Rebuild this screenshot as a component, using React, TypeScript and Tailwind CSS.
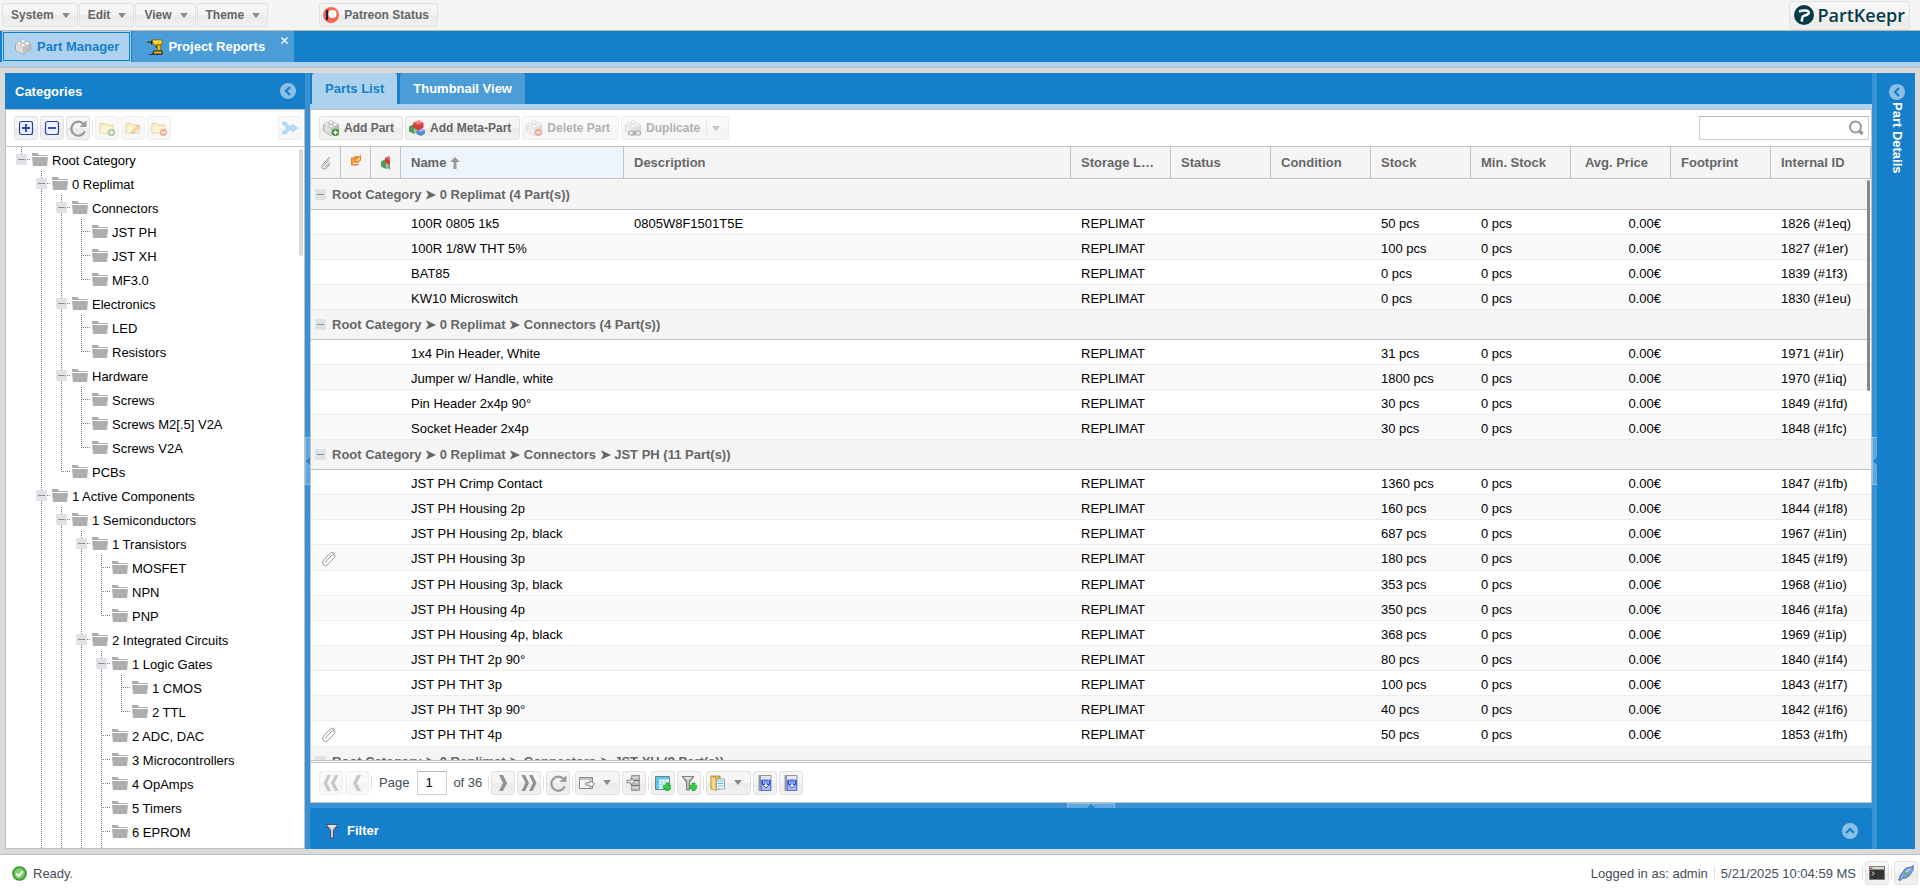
import type { ReactNode } from "react";

const BTN =
  "flex h-6 shrink-0 items-center rounded-[3px] border border-[#e1e1e1] bg-[linear-gradient(#f6f6f6_0%,#f5f5f5_50%,#ebebeb_51%,#f1f1f1_100%)] text-xs font-bold text-[#666]";

/* ---------- icons ---------- */

function Icon({ children, size = 16, className = "" }: { children: ReactNode; size?: number; className?: string }) {
  return (
    <svg width={size} height={size} viewBox="0 0 16 16" fill="none" aria-hidden="true" className={`shrink-0 ${className}`}>
      {children}
    </svg>
  );
}

function BrickShape() {
  return (
    <>
      <path d="M.5 5 8 1.500 15.500 5v6L8 15.500.5 11z" fill="#ececec" stroke="#9a9a9a" strokeWidth=".8" />
      <path d="M8 8.500 15 5.300V11L8 15z" fill="#bdbdbd" />
      <path d="M1 5.300l7 3.200V15L1 11z" fill="#dedede" />
      <g fill="#fcfcfc" stroke="#a0a0a0" strokeWidth=".6">
        <ellipse cx="8" cy="2.400" rx="2.300" ry="1.600" />
        <ellipse cx="4.200" cy="4.400" rx="2.300" ry="1.600" />
        <ellipse cx="11.800" cy="4.400" rx="2.300" ry="1.600" />
        <ellipse cx="8" cy="6.300" rx="2.300" ry="1.600" />
      </g>
    </>
  );
}

function PlusBadge() {
  return (
    <>
      <circle cx="12.500" cy="12.500" r="3.300" fill="#4f9a3a" stroke="#2d7420" strokeWidth=".6" />
      <path d="M12.500 10.500v4M10.500 12.500h4" stroke="#fff" strokeWidth="1.300" />
    </>
  );
}

function MinusBadge() {
  return (
    <>
      <circle cx="12.500" cy="12.500" r="3.300" fill="#ee6a3a" stroke="#c84a20" strokeWidth=".6" />
      <path d="M10.500 12.500h4" stroke="#fff" strokeWidth="1.300" />
    </>
  );
}

function MetaShape() {
  return (
    <>
      <path d="M0 6.500 5 4v10L0 11.500z" fill="#4f9d57" />
      <path d="M5 4l4 2v6.500L5 14z" fill="#8cc890" />
      <path d="M7.500 10 11.500 8l4.500 2v3.500L12 16l-4.500-2z" fill="#5c88c4" />
      <path d="M7.500 10l4-2 4.500 2-4 2z" fill="#9dbce4" />
      <path d="M4 3 9.500.5l5 2.500v4.500l-5 3L4 7.500z" fill="#d63c3c" />
      <path d="M4 3 9.500.5l5 2.500-5 2.500z" fill="#ec6464" />
      <ellipse cx="9.500" cy="1.800" rx="2.600" ry="1.300" fill="#f58c8c" />
    </>
  );
}

function YellowFolder() {
  return (
    <>
      <path d="M1 3.500h5l1.500 1.500H14v8H1z" fill="#f3dc8c" stroke="#c9a13e" strokeWidth=".9" />
      <path d="M1.500 7H13.500v5.500h-12z" fill="#f9eab0" />
    </>
  );
}

function Clip() {
  return (
    <path
      d="M4 11.500 10.800 4a1.800 1.800 0 0 1 2.700 2.400l-6.800 7.200a3 3 0 0 1-4.500-4l7-7.400a3 3 0 0 1 4.800.8"
      stroke="#8c8c8c"
      strokeWidth=".9"
    />
  );
}

function RefreshIcon() {
  return (
    <Icon size={18}>
      <path d="M13 4.600A6.200 6.200 0 1 0 14 11" stroke="#9a9a9a" strokeWidth="2" />
      <path d="M15.500 1v6.200H9.300z" fill="#9a9a9a" />
    </Icon>
  );
}

function Chevrons({ count, left = false }: { count: number; left?: boolean }) {
  return (
    <Icon className={left ? "rotate-180" : ""}>
      {count === 1 && <path d="M4 0h4l4 8-4 8H4l4-8z" fill="#919191" />}
      {count === 2 && <path d="M.5 0h3.500l4 8-4 8H.5l4-8zM8 0h3.500l4 8-4 8H8l4-8z" fill="#919191" />}
    </Icon>
  );
}

function Caret() {
  return <span className="border-x-4 border-t-[5px] border-x-transparent border-t-[#8a8a8a]" />;
}

function CollapseCircle({ up = false }: { up?: boolean }) {
  return (
    <Icon className={up ? "rotate-90" : ""}>
      <circle cx="8" cy="8" r="8" fill="#8bbfe6" />
      <path d="M10 4 6 8l4 4" stroke="#157fcc" strokeWidth="2.200" />
    </Icon>
  );
}

function Funnel({ light = false }: { light?: boolean }) {
  return (
    <>
      <path d="M1 1.500h12L8.500 7.500V15h-3V7.500z" fill={light ? "#b9b9c0" : "#9a9a9a"} stroke={light ? "#333f55" : "#707070"} strokeWidth=".8" />
      <path d="M2.500 2h9L7 6z" fill="#e3e3e8" />
      <path d="M7 6v8" stroke="#eee" strokeWidth=".8" />
    </>
  );
}

function GreenPlus() {
  return <path d="M11 8h3v2.500h2.500v3H14V16h-3v-2.500H8.500v-3H11z" fill="#35cf44" stroke="#1c9a2c" strokeWidth=".7" />;
}

function BookIcon() {
  return (
    <Icon>
      <path d="M2 .5h12v15H2z" fill="#e4e8f0" stroke="#777f90" strokeWidth=".8" />
      <path d="M2 .5h2v15H2z" fill="#8f97a8" />
      <path d="M4.500 5h9v10.500h-9z" fill="#a9bdf2" stroke="#3f63d8" strokeWidth=".8" />
      <path d="M5.500 5.500v4M12.500 5.500v4" stroke="#1f45d0" strokeWidth="1.200" />
      <path d="M8 5.500h2v4h2.500L9 13 5.500 9.500H8z" fill="#fff" stroke="#1f45d0" strokeWidth=".9" />
    </Icon>
  );
}

/* ---------- data ---------- */

type TreeItem = [depth: number, label: string];

const TREE: TreeItem[] = [
  [0, "Root Category"],
  [1, "0 Replimat"],
  [2, "Connectors"],
  [3, "JST PH"],
  [3, "JST XH"],
  [3, "MF3.0"],
  [2, "Electronics"],
  [3, "LED"],
  [3, "Resistors"],
  [2, "Hardware"],
  [3, "Screws"],
  [3, "Screws M2[.5] V2A"],
  [3, "Screws V2A"],
  [2, "PCBs"],
  [1, "1 Active Components"],
  [2, "1 Semiconductors"],
  [3, "1 Transistors"],
  [4, "MOSFET"],
  [4, "NPN"],
  [4, "PNP"],
  [3, "2 Integrated Circuits"],
  [4, "1 Logic Gates"],
  [5, "1 CMOS"],
  [5, "2 TTL"],
  [4, "2 ADC, DAC"],
  [4, "3 Microcontrollers"],
  [4, "4 OpAmps"],
  [4, "5 Timers"],
  [4, "6 EPROM"],
];

interface Part {
  name: string;
  desc?: string;
  stock: string;
  id: string;
  clip?: boolean;
}

const GROUPS: Array<{ title: string; parts: Part[] }> = [
  {
    title: "Root Category ➤ 0 Replimat (4 Part(s))",
    parts: [
      { name: "100R 0805 1k5", desc: "0805W8F1501T5E", stock: "50 pcs", id: "1826 (#1eq)" },
      { name: "100R 1/8W THT 5%", stock: "100 pcs", id: "1827 (#1er)" },
      { name: "BAT85", stock: "0 pcs", id: "1839 (#1f3)" },
      { name: "KW10 Microswitch", stock: "0 pcs", id: "1830 (#1eu)" },
    ],
  },
  {
    title: "Root Category ➤ 0 Replimat ➤ Connectors (4 Part(s))",
    parts: [
      { name: "1x4 Pin Header, White", stock: "31 pcs", id: "1971 (#1ir)" },
      { name: "Jumper w/ Handle, white", stock: "1800 pcs", id: "1970 (#1iq)" },
      { name: "Pin Header 2x4p 90°", stock: "30 pcs", id: "1849 (#1fd)" },
      { name: "Socket Header 2x4p", stock: "30 pcs", id: "1848 (#1fc)" },
    ],
  },
  {
    title: "Root Category ➤ 0 Replimat ➤ Connectors ➤ JST PH (11 Part(s))",
    parts: [
      { name: "JST PH Crimp Contact", stock: "1360 pcs", id: "1847 (#1fb)" },
      { name: "JST PH Housing 2p", stock: "160 pcs", id: "1844 (#1f8)" },
      { name: "JST PH Housing 2p, black", stock: "687 pcs", id: "1967 (#1in)" },
      { name: "JST PH Housing 3p", stock: "180 pcs", id: "1845 (#1f9)", clip: true },
      { name: "JST PH Housing 3p, black", stock: "353 pcs", id: "1968 (#1io)" },
      { name: "JST PH Housing 4p", stock: "350 pcs", id: "1846 (#1fa)" },
      { name: "JST PH Housing 4p, black", stock: "368 pcs", id: "1969 (#1ip)" },
      { name: "JST PH THT 2p 90°", stock: "80 pcs", id: "1840 (#1f4)" },
      { name: "JST PH THT 3p", stock: "100 pcs", id: "1843 (#1f7)" },
      { name: "JST PH THT 3p 90°", stock: "40 pcs", id: "1842 (#1f6)" },
      { name: "JST PH THT 4p", stock: "50 pcs", id: "1853 (#1fh)", clip: true },
    ],
  },
  { title: "Root Category ➤ 0 Replimat ➤ Connectors ➤ JST XH (9 Part(s))", parts: [] },
];

/* ---------- shared bits ---------- */

function IconButton({ label, children, disabled = false }: { label: string; children: ReactNode; disabled?: boolean }) {
  return (
    <button type="button" aria-label={label} disabled={disabled} className={`${BTN} w-6 justify-center ${disabled ? "opacity-50" : ""}`}>
      {children}
    </button>
  );
}

function Sep() {
  return <span className="h-3.5 w-px shrink-0 bg-[#e1e1e1]" />;
}

function Expander({ label }: { label: string }) {
  return (
    <button type="button" aria-label={`Collapse ${label}`} className="flex h-[11px] w-[11px] shrink-0 items-center justify-center bg-[#dfe3e8]">
      <span className="h-px w-[7px] bg-[#8a8f95]" />
    </button>
  );
}

function Splitter({ horizontal = false }: { horizontal?: boolean }) {
  return (
    <div className={`flex shrink-0 items-center justify-center bg-[#3892d4] ${horizontal ? "h-[5px]" : "w-[5px]"}`}>
      <button
        type="button"
        aria-label="Collapse panel"
        className={`flex items-center justify-center border-[#8bc0e8] bg-[#5fa7dc] ${horizontal ? "h-[5px] w-12 border-x border-t" : "h-12 w-[5px] border-y border-l"}`}
      >
        <svg width={horizontal ? 8 : 4} height={horizontal ? 4 : 8} aria-hidden="true">
          <path d={horizontal ? "M0 4 4 0l4 4z" : "M4 0 0 4l4 4z"} fill="#2a84c8" />
        </svg>
      </button>
    </div>
  );
}

/* ---------- top ---------- */

function MenuBar() {
  return (
    <header className="flex h-[31px] shrink-0 items-center justify-between border-b border-[#c1b8ae] bg-[#f5f5f5] pl-0.5 pr-2.5">
      <div className="flex gap-px">
        {["System", "Edit", "View", "Theme"].map((item) => (
          <button key={item} type="button" className={`${BTN} gap-2 pl-2 pr-[7px]`}>
            {item}
            <Caret />
          </button>
        ))}
        <button type="button" className={`${BTN} ml-[50px] gap-[5px] pl-[3px] pr-2`}>
          <Icon>
            <circle cx="8" cy="8" r="8" fill="#f96854" />
            <circle cx="9.500" cy="7" r="4" fill="#fff" />
            <path d="M3 3h2v10H3z" fill="#052d49" />
          </Icon>
          Patreon Status
        </button>
      </div>
      <a href="#" className="flex h-[29px] items-center gap-[3px] rounded-[3px] border border-[#e1e1e1] bg-[linear-gradient(#f6f6f6_50%,#eeeeee_51%)] px-1 font-['Open_Sans',sans-serif] text-[18px] font-semibold leading-none text-[#063b4b]">
        <svg width="20" height="20" viewBox="0 0 20 20" fill="none" aria-hidden="true">
          <circle cx="10" cy="10" r="10" fill="#063b4b" />
          <path d="M5 6.500C9 5 14.800 4.800 14.800 7.800c0 2.700-5.300 2-6.300 4.200-.4 1.500-.3 3-1.200 4.500" stroke="#fff" strokeWidth="2.500" />
        </svg>
        PartKeepr
      </a>
    </header>
  );
}

function MainTabs() {
  return (
    <nav className="shrink-0 border-b border-[#c1c1c1]">
      <div className="flex h-[31px] gap-px bg-[#157fcc] pl-0.5">
        <button type="button" className="bg-[#add2ed] p-px text-[13px] font-bold text-[#157fcc]">
          <span className="flex h-full items-center gap-1.5 border border-[#157fcc] pl-[11px] pr-2.5">
            <Icon>
              <BrickShape />
            </Icon>
            Part Manager
          </span>
        </button>
        <div className="relative flex bg-[#4b9cd7]">
          <button type="button" className="flex items-center gap-[5px] pl-[15px] pr-[29px] text-[13px] font-bold text-white">
            <Icon>
              <path d="M0 3.200h4" stroke="#333" strokeWidth="1.300" />
              <path d="M4 1.500h1.500v4H4z" fill="#222" />
              <path d="M5.500.8H14q1.500 0 1.500 2.500L14 6H6z" fill="#f7cc1e" stroke="#6b5200" strokeWidth=".7" />
              <path d="M6.500 2.500h5" stroke="#fff0a0" />
              <path d="M10 6h4l-.5 6H10.500z" fill="#efb90c" stroke="#6b5200" strokeWidth=".7" />
              <path d="M9 7v2" stroke="#222" />
              <path d="M7 12h8v3H5.500z" fill="#f0be18" stroke="#222" strokeWidth="1.100" />
              <path d="M2 15.500h13" stroke="#25415c" />
            </Icon>
            Project Reports
          </button>
          <button type="button" aria-label="Close Project Reports" className="absolute right-1.5 top-1.5">
            <svg width="7" height="7" aria-hidden="true">
              <path d="M.5.5l6 6M6.500.5l-6 6" stroke="#fff" strokeWidth="1.400" />
            </svg>
          </button>
        </div>
      </div>
      <div className="h-[5px] bg-[#add2ed]" />
    </nav>
  );
}

/* ---------- categories ---------- */

function hasNextSibling(index: number, depth: number) {
  for (let i = index + 1; i < TREE.length; i++) {
    if (TREE[i][0] === depth) return true;
    if (TREE[i][0] < depth) return false;
  }
  return depth > 0;
}

function Guide({ d }: { d?: string }) {
  return (
    <svg width="20" height="24" className="shrink-0" aria-hidden="true">
      {d && <path d={d} stroke="#777" strokeDasharray="1 1" fill="none" />}
    </svg>
  );
}

function TreeRow({ index }: { index: number }) {
  const [depth, label] = TREE[index];
  const open = index + 1 < TREE.length && TREE[index + 1][0] > depth;
  const next = hasNextSibling(index, depth);
  return (
    <li className="flex h-6 items-center">
      {Array.from({ length: depth }, (_, d) => (
        <Guide key={d} d={hasNextSibling(index, d) ? "M9.5 0V24" : undefined} />
      ))}
      <span className="relative flex shrink-0">
        <Guide d={next ? "M9.5 0V24M9 12.5H18" : "M9.5 0V12M9 12.5H18"} />
        {open && (
          <span className="absolute left-1 top-[7px]">
            <Expander label={label} />
          </span>
        )}
      </span>
      <Icon>
        <path d="M0 2h6l1 2h9v1H0z" fill="#adadad" />
        <path d="M0 6h16l-1 9H1z" fill="#adadad" />
      </Icon>
      <span className="whitespace-nowrap pl-1 pt-0.5 text-black">{label}</span>
    </li>
  );
}

function Categories() {
  return (
    <aside className="flex w-[300px] shrink-0 flex-col">
      <div className="flex h-9 shrink-0 items-center justify-between bg-[#157fcc] pl-2.5 pr-[9px]">
        <h2 className="font-bold text-white">Categories</h2>
        <button type="button" aria-label="Collapse Categories">
          <CollapseCircle />
        </button>
      </div>
      <div className="flex min-h-0 flex-1 flex-col border border-[#c1c1c1] bg-white">
        <div className="flex h-9 shrink-0 items-center gap-0.5 pl-2 pr-0.5">
          <IconButton label="Expand all">
            <Icon>
              <rect x="1.500" y="1.500" width="13" height="13" rx="2" fill="#eef2ff" stroke="#2440b8" strokeWidth="1.200" />
              <path d="M8 4v8M4 8h8" stroke="#2440b8" strokeWidth="1.800" />
            </Icon>
          </IconButton>
          <IconButton label="Collapse all">
            <Icon>
              <rect x="1.500" y="1.500" width="13" height="13" rx="2" fill="#eef2ff" stroke="#2440b8" strokeWidth="1.200" />
              <path d="M4 8h8" stroke="#2440b8" strokeWidth="1.800" />
            </Icon>
          </IconButton>
          <IconButton label="Reload">
            <RefreshIcon />
          </IconButton>
          <Sep />
          <IconButton label="Add category" disabled>
            <Icon>
              <YellowFolder />
              <PlusBadge />
            </Icon>
          </IconButton>
          <IconButton label="Edit category" disabled>
            <Icon>
              <YellowFolder />
              <path d="M6 13.500 7 11l6-6 2 2-6 6z" fill="#f0b860" stroke="#b97a28" strokeWidth=".8" />
            </Icon>
          </IconButton>
          <IconButton label="Delete category" disabled>
            <Icon>
              <YellowFolder />
              <MinusBadge />
            </Icon>
          </IconButton>
          <div className="ml-auto">
            <IconButton label="Show category path" disabled>
              <Icon>
                <path
                  d="M1 2q4 0 6.500 4.500H10V4.500L15.500 8 10 11.500v-2H7.500Q5 14 1 14v-2.500Q4 11 5 8 4 5 1 4.500z"
                  fill="#6cc0f2"
                  stroke="#2f98d8"
                  strokeWidth=".9"
                />
              </Icon>
            </IconButton>
          </div>
        </div>
        <div className="relative min-h-0 flex-1 overflow-hidden border-t border-[#c1c1c1]">
          <ul className="pl-1.5">
            {TREE.map((_, i) => (
              <TreeRow key={i} index={i} />
            ))}
            <li className="flex" aria-hidden="true">
              {[0, 1, 2, 3, 4].map((d) => (
                <Guide key={d} d={d > 0 ? "M9.5 0V24" : undefined} />
              ))}
            </li>
          </ul>
          <span className="absolute right-px top-0.5 h-[107px] w-1 rounded-full bg-[#d9d9d9]" />
        </div>
      </div>
    </aside>
  );
}

/* ---------- parts grid ---------- */

const TH = "truncate border-b border-r border-[#c1c1c1] px-2.5 text-left font-bold";

function PartsTable() {
  return (
    <table className="w-full table-fixed border-separate border-spacing-0">
      <colgroup>
        <col className="w-[30px]" />
        <col className="w-[30px]" />
        <col className="w-[30px]" />
        <col className="w-[223px]" />
        <col />
        {Array.from({ length: 8 }, (_, i) => (
          <col key={i} className="w-[100px]" />
        ))}
      </colgroup>
      <thead>
        <tr className="h-8 bg-[#f5f5f5] text-[#666]">
          <th aria-label="Attachments" className="border-b border-r border-[#c1c1c1] pl-2.5">
            <svg width="10" height="14" viewBox="0 0 10 14" fill="none" aria-hidden="true">
              <path d="M2.500 10 8 3.500M4 11.500l5-5.500M1 9.500l7.500-8.500M1 9.500q-1 3 2 3.500 2 0 3-1.500l3-3.500" stroke="#8c8c8c" strokeWidth=".9" />
            </svg>
          </th>
          <th aria-label="Needs review" className="border-b border-r border-[#c1c1c1] pb-1 pl-2.5">
            <svg width="10" height="11" viewBox="0 0 10 11" fill="none" aria-hidden="true">
              <path d="M.5 3H3l1-1.500h3V10H.5z" fill="#f3a04a" stroke="#e07b18" />
              <path d="M4 4.500 9.500.5v5L5 7z" fill="#ffc071" stroke="#e07b18" strokeWidth=".9" />
              <path d="M2 8.500h5" stroke="#fff2dc" />
            </svg>
          </th>
          <th aria-label="Meta part" className="border-b border-r border-[#c1c1c1] pl-2.5">
            <svg width="9" height="14" viewBox="0 1 9 14" fill="none" aria-hidden="true">
              <MetaShape />
            </svg>
          </th>
          <th className="border-b border-r border-[#c1c1c1] bg-[#edf4fb] px-2.5 text-left font-bold">
            <span className="flex items-center gap-1">
              Name
              <svg width="10" height="12" aria-hidden="true">
                <path d="M5 0l5 5H6.500v7h-3V5H0z" fill="#999" />
              </svg>
            </span>
          </th>
          <th className={TH}>Description</th>
          <th className={TH}>Storage Location</th>
          <th className={TH}>Status</th>
          <th className={TH}>Condition</th>
          <th className={TH}>Stock</th>
          <th className={TH}>Min. Stock</th>
          <th className="border-b border-r border-[#c1c1c1] pr-[22px] text-right font-bold">Avg. Price</th>
          <th className={TH}>Footprint</th>
          <th className={TH}>Internal ID</th>
        </tr>
      </thead>
      {GROUPS.map((group, g) => (
        <tbody key={group.title}>
          <tr className={g === 0 ? "h-[31px]" : "h-[30px]"}>
            <th colSpan={13} className={`border-b border-b-[#c1c1c1] bg-[#f5f5f5] pl-1 text-left font-bold text-[#666] ${g === 0 ? "border-t border-t-white" : ""}`}>
              <span className="flex items-center gap-1.5">
                <Expander label={group.title} />
                {group.title}
              </span>
            </th>
          </tr>
          {group.parts.map((part, i) => (
            <tr
              key={part.id}
              className={`text-black [&>td]:border-b [&>td]:border-[#ededed] [&>td]:pt-0.5 ${part.clip ? "h-[26px]" : "h-[25px]"} ${i % 2 ? "bg-[#fafafa]" : "bg-white"}`}
            >
              <td className="pl-2.5">
                {part.clip && (
                  <Icon>
                    <Clip />
                  </Icon>
                )}
              </td>
              <td />
              <td />
              <td className="truncate px-2.5">{part.name}</td>
              <td className="truncate px-2.5">{part.desc}</td>
              <td className="px-2.5">REPLIMAT</td>
              <td />
              <td />
              <td className="px-2.5">{part.stock}</td>
              <td className="px-2.5">0 pcs</td>
              <td className="px-2.5 text-right">0.00€</td>
              <td />
              <td className="px-2.5">{part.id}</td>
            </tr>
          ))}
        </tbody>
      ))}
    </table>
  );
}

function PartsToolbar() {
  return (
    <div className="flex h-9 shrink-0 items-center bg-white pl-2 pr-0.5">
      <button type="button" className={`${BTN} gap-[5px] pl-[3px] pr-2`}>
        <Icon>
          <BrickShape />
          <PlusBadge />
        </Icon>
        Add Part
      </button>
      <button type="button" className={`${BTN} ml-0.5 gap-[5px] pl-[3px] pr-2`}>
        <Icon>
          <MetaShape />
        </Icon>
        Add Meta-Part
      </button>
      <button type="button" disabled className={`${BTN} ml-0.5 gap-[5px] pl-[3px] pr-2 opacity-50`}>
        <Icon>
          <BrickShape />
          <MinusBadge />
        </Icon>
        Delete Part
      </button>
      <button type="button" disabled className={`${BTN} ml-0.5 gap-[5px] pl-[3px] pr-2 opacity-50`}>
        <Icon>
          <BrickShape />
          <rect x="3.500" y="11" width="6" height="4" rx="2" fill="#ddd" stroke="#555" strokeWidth="1.200" />
          <rect x="9.500" y="11" width="6" height="4" rx="2" fill="#ddd" stroke="#555" strokeWidth="1.200" />
          <path d="M7 13h5" stroke="#555" strokeWidth="1.200" />
        </Icon>
        Duplicate
        <span className="ml-px h-4 w-px bg-[#d0d0d0]" />
        <Caret />
      </button>
      <label className="ml-auto flex h-6 w-[170px] items-center border border-[#d0d0d0] border-t-[#b8b8b8] bg-white pr-1">
        <input type="text" aria-label="Search" className="min-w-0 flex-1 px-1 outline-none" />
        <Icon>
          <circle cx="7.500" cy="7" r="5.500" stroke="#999" strokeWidth="2" />
          <path d="m11.500 11 3 3" stroke="#999" strokeWidth="3.400" />
        </Icon>
      </label>
    </div>
  );
}

function Pager() {
  return (
    <div className="flex h-10 shrink-0 items-center gap-0.5 border-t border-[#c1c1c1] bg-white pl-2 text-[#404e5a]">
      <IconButton label="First page" disabled>
        <Chevrons count={2} left />
      </IconButton>
      <IconButton label="Previous page" disabled>
        <Chevrons count={1} left />
      </IconButton>
      <Sep />
      <label className="flex items-center gap-2 pl-[5px]">
        Page
        <input type="text" defaultValue="1" className="h-6 w-[30px] border border-[#d0d0d0] border-t-[#b8b8b8] pl-[7px] text-black outline-none" />
      </label>
      <span className="px-1">of 36</span>
      <Sep />
      <IconButton label="Next page">
        <Chevrons count={1} />
      </IconButton>
      <IconButton label="Last page">
        <Chevrons count={2} />
      </IconButton>
      <Sep />
      <IconButton label="Refresh">
        <RefreshIcon />
      </IconButton>
      <Sep />
      <button type="button" aria-label="Export" className={`${BTN} gap-2 pl-[3px] pr-2`}>
        <Icon>
          <path d="M.5 2.500h13v11H.5z" fill="#f4f4f4" stroke="#888" />
          <path d="M1 3h12v2H1z" fill="#c4c4c4" />
          <path d="M7 7.800h4V5.500L15.500 9 11 12.500v-2.300H7z" fill="#fff" stroke="#777" strokeWidth=".9" />
        </Icon>
        <Caret />
      </button>
      <IconButton label="Import">
        <Icon>
          <path d="M5.500.5h8v15h-8z" fill="#bdbdbd" stroke="#8a8a8a" strokeWidth=".8" />
          <path d="M6 5.500h7.500M6 10.500h7.500" stroke="#777" />
          <path d="M7 2.500h5M7 7.500h5M7 12.500h5" stroke="#e5e5e5" strokeWidth="1.200" />
          <path d="M1 5.200h4V3l4 3.500L5 10V7.800H1z" fill="#eee" stroke="#777" strokeWidth=".9" />
        </Icon>
      </IconButton>
      <Sep />
      <IconButton label="Add column">
        <Icon>
          <path d="M.5 1.500h14v13H.5z" fill="#fff" stroke="#6f8088" />
          <path d="M1 2h13v2.500H1zM1 2h3v12H1z" fill="#58c8ee" />
          <path d="M4 7h10M4 9.500h10M4 12h10M7 5v9M10 5v9" stroke="#8edcf2" strokeWidth=".9" />
          <GreenPlus />
        </Icon>
      </IconButton>
      <IconButton label="Add filter">
        <Icon>
          <Funnel />
          <GreenPlus />
        </Icon>
      </IconButton>
      <Sep />
      <button type="button" aria-label="Presets" className={`${BTN} gap-2 pl-[3px] pr-2`}>
        <Icon>
          <path d="M1 1h9v13H1z" fill="#e9bb58" stroke="#a87c22" strokeWidth=".7" />
          <path d="M1 1l5 2v12.500L1 14z" fill="#f6d88a" stroke="#b88c34" strokeWidth=".7" />
          <path d="M6.500 4h8v10h-8z" fill="#fff" stroke="#7b93a8" strokeWidth=".8" />
          <path d="M7.500 6h6M7.500 8.500h6M7.500 11h6" stroke="#58b8e6" strokeWidth="1.200" />
        </Icon>
        <Caret />
      </button>
      <IconButton label="Download list">
        <BookIcon />
      </IconButton>
      <IconButton label="Download page">
        <BookIcon />
      </IconButton>
    </div>
  );
}

function PartsPanel() {
  return (
    <main className="flex min-w-0 flex-1 flex-col bg-[#3892d4]">
      <nav className="shrink-0 bg-[#157fcc]">
        <div className="flex h-[31px] gap-[3px] pl-0.5 font-bold">
          <button type="button" className="rounded-t-[3px] bg-[#add2ed] px-[13px] text-[#157fcc]">
            Parts List
          </button>
          <button type="button" className="rounded-t-[3px] bg-[#4b9cd7] px-[13px] text-white">
            Thumbnail View
          </button>
        </div>
        <div className="h-[5px] bg-[#add2ed]" />
      </nav>
      <section className="flex min-h-0 flex-1 flex-col border border-[#c1c1c1] bg-white">
        <PartsToolbar />
        <div className="relative mb-px min-h-0 flex-1 overflow-hidden border-y border-[#c1c1c1]">
          <PartsTable />
          <span className="absolute right-px top-[33px] h-[211px] w-[3px] rounded-full bg-[#85888b]" />
        </div>
        <Pager />
      </section>
      <Splitter horizontal />
      <section className="flex h-[41px] shrink-0 items-center justify-between rounded-[3px] bg-[#157fcc] pl-[15px] pr-3.5 pt-1">
        <h2 className="flex items-center gap-1.5 font-bold text-white">
          <Icon>
            <Funnel light />
          </Icon>
          Filter
        </h2>
        <button type="button" aria-label="Expand Filter">
          <CollapseCircle up />
        </button>
      </section>
    </main>
  );
}

function StatusBar() {
  return (
    <footer className="flex h-[37px] shrink-0 items-center gap-1.5 border-t border-[#c1c1c1] bg-white pl-3 pr-0.5 text-[#404e5a]">
      <Icon size={15}>
        <circle cx="8" cy="8" r="7.200" fill="#5cb848" stroke="#2f8a2a" strokeWidth="1.200" />
        <circle cx="8" cy="8" r="5" fill="#84d070" />
        <path d="m4.500 8 2.500 2.800L11.500 5.500" stroke="#fff" strokeWidth="2" />
      </Icon>
      <span>Ready.</span>
      <span className="ml-auto">Logged in as: admin</span>
      <Sep />
      <span>5/21/2025 10:04:59 MS</span>
      <div className="flex items-center gap-0.5">
        <Sep />
        <IconButton label="Console">
          <Icon>
            <path d="M.5 1.500h15v13H.5z" fill="#333" stroke="#777" strokeWidth=".8" />
            <path d="M1 2h14v2.500H1z" fill="#d8d8d8" />
            <path d="M1.500 2.500H3V4H1.500z" fill="#d33" />
            <path d="M3.500 2.500H5V4H3.500z" fill="#db3" />
            <path d="M3 6.500 5 8.500 3 10.500" stroke="#fff" />
          </Icon>
        </IconButton>
        <Sep />
        <IconButton label="Connection">
          <Icon>
            <path d="M15.500.5q-1 1 0 4L11 11q-3 3-6 2l-3 2.500-1.500-.5q1-1 1.500-4L6 5q3-3.500 6-2.500z" fill="#7ba3e0" stroke="#3c62a8" strokeWidth=".8" />
            <path d="m5.500 6 5 5" stroke="#6ab04c" strokeWidth="1.400" />
            <path d="M12 4 8 7" stroke="#c8dcf8" strokeWidth="1.400" />
          </Icon>
        </IconButton>
      </div>
    </footer>
  );
}

export default function App() {
  return (
    <div className="flex h-screen flex-col overflow-hidden bg-[#dadada] font-['Liberation_Sans',Arial,sans-serif] text-[13px] leading-[17px]">
      <MenuBar />
      <MainTabs />
      <div className="my-[5px] flex min-h-0 flex-1 px-[5px]">
        <Categories />
        <Splitter />
        <PartsPanel />
        <Splitter />
        <aside className="flex w-[38px] shrink-0 flex-col items-center gap-0.5 bg-[#157fcc] pl-0.5 pt-[11px]">
          <button type="button" aria-label="Expand Part Details" className="flex">
            <CollapseCircle />
          </button>
          <h2 className="font-bold text-white [writing-mode:vertical-rl]">Part Details</h2>
        </aside>
      </div>
      <StatusBar />
    </div>
  );
}
